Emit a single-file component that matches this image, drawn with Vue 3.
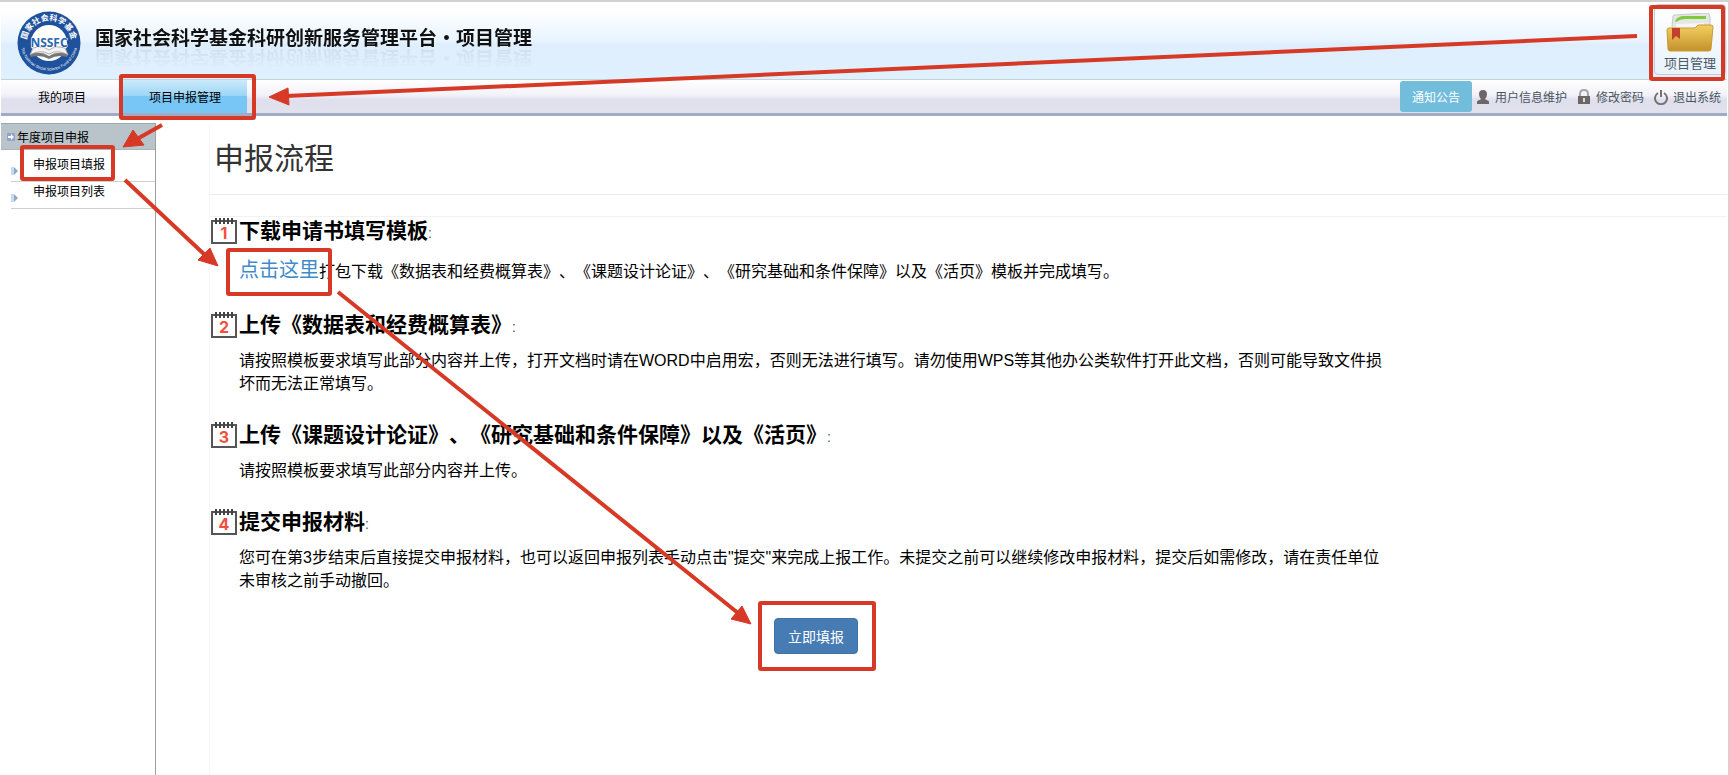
<template>
  <div class="page">
    <header class="banner">
      <div class="brand">
        <svg class="logo" viewBox="0 0 64 64" aria-hidden="true">
          <defs>
            <path id="arc-top" d="M9.500 32a22.500 22.500 0 0 1 45 0" />
            <path id="arc-bottom" d="M3.500 31a28.500 28.500 0 0 0 57 0" />
          </defs>
          <circle cx="32" cy="32" r="31.500" fill="#1f529c" />
          <circle cx="32" cy="32" r="18" fill="#fff" />
          <text class="logo-cn"><textPath href="#arc-top" startOffset="50%" text-anchor="middle">国家社会科学基金</textPath></text>
          <text class="logo-en"><textPath href="#arc-bottom" startOffset="50%" text-anchor="middle">The National Social Science Fund of China</textPath></text>
          <path d="M13 44q10-6 19-1q9-5 19 1l-3-7q-9-3-16 2q-7-5-16-2z" fill="#f4f4f4" stroke="#aaa" />
          <path d="M13 44q10-5 19 1q9-6 19-1l-1 2q-9-3-18 2q-9-5-18-2z" fill="#777" />
          <text class="logo-name" x="32" y="36" text-anchor="middle">NSSFC</text>
        </svg>
        <h1>国家社会科学基金科研创新服务管理平台・项目管理</h1>
      </div>
      <a href="#" class="module">
        <svg viewBox="0 0 48 40" aria-hidden="true">
          <defs>
            <linearGradient id="folder" x1="0" y1="0" x2="0" y2="1">
              <stop offset="0" stop-color="#f5cf62" />
              <stop offset="1" stop-color="#c2922a" />
            </linearGradient>
          </defs>
          <path d="M7 3q0-1 2-1l31-2q4 0 4 4v20H5z" fill="#e6e6e6" stroke="#c9c9c9" />
          <path d="M9 8q3-5 9-5h22v3H19q-5 0-9 3z" fill="#7ccb3c" />
          <path d="M10 11l28-1v8H10z" fill="#f6f6f6" />
          <path d="M1 17q0-2 2-2h25q2 0 3-2l1-1h13q2 0 2 2l-2 22q0 2-2 2H4q-2 0-2-2z" fill="url(#folder)" stroke="#c99c35" />
          <path d="M6 15h8v11l-4-3-4 4z" fill="#c5402b" />
        </svg>
        <span>项目管理</span>
      </a>
    </header>

    <nav class="navbar">
      <div class="tabs">
        <a href="#" class="tab">我的项目</a>
        <a href="#" class="tab active">项目申报管理</a>
      </div>
      <div class="tools">
        <button type="button" class="notice">通知公告</button>
        <a href="#">
          <svg viewBox="0 0 14 16"><path d="M7 1c3 0 4 2 4 4s-1 4-2 5c0 1 4 1 4 3v2H1v-2c0-2 4-2 4-3c-1-1-2-3-2-5s1-4 4-4z" fill="#6d6666" /></svg>
          用户信息维护
        </a>
        <a href="#">
          <svg viewBox="0 0 14 16">
            <path d="M3 8V5q0-4 4-4t4 4v3" fill="none" stroke="#aaa5a5" stroke-width="2" />
            <path d="M1 7h12v8H1z" fill="#6d6666" />
            <path d="M7 9v4" stroke="#ddd" stroke-width="2" />
          </svg>
          修改密码
        </a>
        <a href="#">
          <svg viewBox="0 0 14 16"><path d="M4 4a6 6 0 1 0 6 0M7 1v7" fill="none" stroke="#777171" stroke-width="2" /></svg>
          退出系统
        </a>
      </div>
    </nav>

    <div class="body">
      <aside class="sidebar">
        <h2>
          <svg viewBox="0 0 8 8" aria-hidden="true">
            <rect width="8" height="8" rx="1" fill="#8fa3cc" />
            <path d="M1 3h3V1l3 3l-3 3V5H1z" fill="#fff" />
          </svg>
          年度项目申报
        </h2>
        <ul>
          <li v-for="item in menu" :key="item">
            <svg viewBox="0 0 8 8" aria-hidden="true">
              <path d="M0 0h3v8H0z" fill="#c3dcf0" />
              <path d="M3 0l4 4l-4 4z" fill="#8fa9cc" />
            </svg>
            <a href="#">{{ item }}</a>
          </li>
        </ul>
      </aside>

      <main class="content">
        <h2 class="title">申报流程</h2>
        <div class="steps">
          <section v-for="(step, index) in steps" :key="index" class="step">
            <h3>
              <svg viewBox="0 0 28 28" aria-hidden="true">
                <path d="M2 4v22h24V4z" fill="#fff" stroke="#555" stroke-width="2" />
                <path d="M6 1v6M10 1v6M14 1v6M18 1v6M22 1v6" stroke="#444" stroke-width="2" />
                <text class="step-no" x="14" y="22" text-anchor="middle">{{ index + 1 }}</text>
              </svg>
              {{ step.title }}<span class="colon">:</span>
            </h3>
            <p><a v-if="step.link" href="#">{{ step.link }}</a>{{ step.text }}</p>
          </section>
          <button type="button" class="submit">立即填报</button>
        </div>
      </main>
    </div>

    <!-- 操作指引 -->
    <svg class="guide" viewBox="0 0 1729 775" aria-hidden="true">
      <rect v-for="(box, i) in boxes" :key="'b' + i" v-bind="box" rx="1" />
      <g v-for="(arrow, i) in arrows" :key="'a' + i">
        <path :d="arrow.line" />
        <path :d="arrow.head" class="head" />
      </g>
    </svg>
  </div>
</template>

<script setup>
import { ref } from 'vue'

const menu = ref(['申报项目填报', '申报项目列表'])

const steps = ref([
  {
    title: '下载申请书填写模板',
    link: '点击这里',
    text: '打包下载《数据表和经费概算表》、《课题设计论证》、《研究基础和条件保障》以及《活页》模板并完成填写。'
  },
  {
    title: '上传《数据表和经费概算表》',
    text: '请按照模板要求填写此部分内容并上传，打开文档时请在WORD中启用宏，否则无法进行填写。请勿使用WPS等其他办公类软件打开此文档，否则可能导致文件损坏而无法正常填写。'
  },
  {
    title: '上传《课题设计论证》、《研究基础和条件保障》以及《活页》',
    text: '请按照模板要求填写此部分内容并上传。'
  },
  {
    title: '提交申报材料',
    text: '您可在第3步结束后直接提交申报材料，也可以返回申报列表手动点击"提交"来完成上报工作。未提交之前可以继续修改申报材料，提交后如需修改，请在责任单位未审核之前手动撤回。'
  }
])

const boxes = [
  { x: 1651, y: 7, width: 72, height: 72 },
  { x: 121, y: 76, width: 133, height: 42 },
  { x: 22, y: 147, width: 91, height: 32 },
  { x: 228, y: 250, width: 102, height: 44 },
  { x: 760, y: 603, width: 114, height: 66 }
]

const arrows = [
  { line: 'M1637 36L286 96', head: 'M269 97L288 88L289 105z' },
  { line: 'M162 125L137 139', head: 'M123 147L133 130L144 145z' },
  { line: 'M125 180L206 256', head: 'M218 266L198 260L210 248z' },
  { line: 'M338 292L738 613', head: 'M751 624L731 619L742 606z' }
]
</script>

<style>
body {
  margin: 0;
}
</style>

<style scoped>
.page {
  position: relative;
  box-sizing: border-box;
  display: flex;
  flex-direction: column;
  min-height: 100vh;
  padding: 0 1px;
  border-top: 2px solid #d2d2d2;
  border-right: 1px solid #d2d2d2;
  background: #fff;
  color: #000;
  font-family: "Liberation Sans", "Noto Sans CJK SC", sans-serif;
  font-size: 12px;
  text-spacing-trim: space-all;
}

a {
  color: inherit;
  text-decoration: none;
}

h1,
h2,
h3,
p,
ul {
  margin: 0;
  padding: 0;
}

.banner {
  display: flex;
  justify-content: space-between;
  height: 77px;
  background: linear-gradient(#fff 10%, #e8f4fe 50%, #dfeefd 55%, #dff0fe);
  border-bottom: 1px solid #c9d1d6;
}

.brand {
  display: flex;
  align-items: flex-start;
  gap: 14px;
  padding: 9px 0 0 16px;
}

.logo {
  width: 64px;
  height: 64px;
}

.logo-cn {
  font-size: 8px;
  font-weight: bold;
  fill: #fff;
}

.logo-en {
  font-size: 4px;
  fill: #fff;
}

.logo-name {
  font-family: "Open Sans", "Liberation Sans", sans-serif;
  font-size: 12px;
  font-weight: bold;
  fill: #2c66ad;
  stroke: #fff;
  stroke-width: 1;
  paint-order: stroke;
}

h1 {
  padding-top: 17px;
  font-size: 19px;
  font-weight: bold;
  line-height: 22px;
  color: #111;
  -webkit-box-reflect: below -4px linear-gradient(transparent 40%, rgba(0, 0, 0, 0.08));
}

.module {
  display: flex;
  flex-direction: column;
  align-items: center;
  width: 72px;
  margin: 2px 1px 4px 0;
  padding-top: 8px;
  border: 1px solid #c4ccd2;
  border-radius: 4px;
  box-sizing: border-box;
  background: linear-gradient(#fff, #e9f3fc);
  font-size: 13px;
  line-height: 22px;
  color: #4c5a66;
}

.module svg {
  width: 48px;
  height: 40px;
  flex-shrink: 0;
}

.navbar {
  display: flex;
  justify-content: space-between;
  height: 33px;
  background: linear-gradient(#fff, #f2f2f9 45%, #dfe0ed 60%, #e2e2ee);
  border-bottom: 3px solid #a2abc5;
}

.tabs {
  display: flex;
}

.tab {
  padding: 0 37px;
  line-height: 36px;
}

.tab.active {
  padding: 0 26px;
  background: linear-gradient(#cdeafb, #9bd5f7 48%, #78c6f5 50%);
}

.tools {
  display: flex;
  align-items: center;
  gap: 10px;
  padding-right: 6px;
  color: #4b555f;
}

.tools a {
  display: flex;
  align-items: center;
  gap: 5px;
}

.tools svg {
  width: 14px;
  height: 16px;
}

.notice {
  width: 72px;
  height: 31px;
  margin-right: -6px;
  padding: 0;
  border: 0;
  border-radius: 3px;
  background: #72bddb;
  color: #fff;
  font-family: inherit;
  font-size: 12px;
}

.body {
  display: flex;
  flex: 1;
  padding-top: 7px;
}

.sidebar {
  width: 154px;
  border-right: 1px solid #98a0a6;
}

.sidebar h2 {
  display: flex;
  align-items: center;
  gap: 2px;
  height: 25px;
  padding-left: 6px;
  border-top: 1px solid #98a9b0;
  border-bottom: 1px solid #aab5bb;
  background: #b9c4ca;
  font-size: 12px;
  font-weight: normal;
}

.sidebar svg {
  width: 8px;
  height: 8px;
}

.sidebar ul {
  padding: 5px 0 0 10px;
  list-style: none;
}

.sidebar li {
  display: flex;
  align-items: flex-end;
  gap: 14px;
  padding-bottom: 6px;
  border-bottom: 1px solid #d0d0d0;
  line-height: 20px;
}

.content {
  flex: 1;
  margin-left: 53px;
  border-left: 1px solid #f6f6f6;
}

.title {
  padding: 14px 4px 13px;
  border-bottom: 1px solid #ececec;
  font-size: 30px;
  font-weight: normal;
  line-height: 44px;
  color: #333;
}

.steps {
  display: flex;
  flex-direction: column;
  margin-top: 21px;
  border-top: 1px solid #f2f2f2;
}

.step {
  margin-bottom: 26px;
}

h3 {
  display: flex;
  align-items: center;
  height: 28px;
  font-size: 21px;
  line-height: 28px;
}

h3 svg {
  width: 28px;
  height: 28px;
  margin-right: 1px;
}

.step-no {
  font-family: Inter, sans-serif;
  font-size: 16px;
  font-weight: bold;
  fill: #f0503c;
}

.colon {
  padding-top: 4px;
  font-size: 14px;
  font-weight: normal;
  color: #555;
}

.step p {
  max-width: 1152px;
  padding: 10px 0 0 29px;
  font-size: 16px;
  line-height: 23px;
}

.step p a {
  font-size: 20px;
  line-height: 30px;
  color: #428bca;
}

.submit {
  align-self: flex-start;
  width: 84px;
  height: 36px;
  margin-left: 564px;
  border: 1px solid #3d74ab;
  border-radius: 4px;
  background: #467bb4;
  color: #fff;
  font-family: inherit;
  font-size: 14px;
}

.guide {
  position: absolute;
  top: -2px;
  left: 0;
  width: 100vw;
  height: auto;
  pointer-events: none;
  fill: none;
  stroke: #d63a26;
  stroke-width: 4;
}

.guide .head {
  fill: #d63a26;
  stroke-width: 1;
}
</style>
